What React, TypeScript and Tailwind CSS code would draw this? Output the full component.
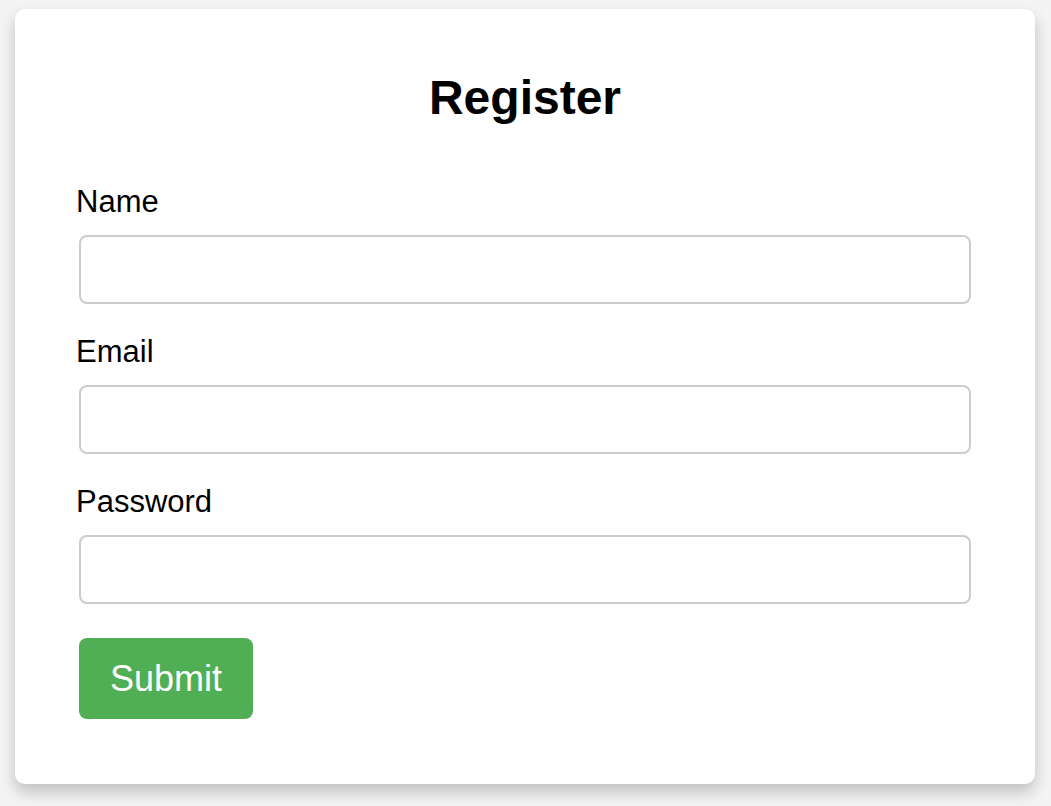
export default function App() {
  const fields = ['Name', 'Email', 'Password'];
  return (
    <div className="min-h-screen bg-[#f4f4f4] pt-[9px] pl-[15px] font-['Liberation_Sans',Arial,sans-serif] text-black">
      <div className="w-[1020px] h-[775px] bg-white rounded-[10px] shadow-[0_8px_16px_rgba(0,0,0,0.22)] px-[61px] pt-[62px]">
        <h2 className="text-center text-[48px] font-bold leading-[53px]">Register</h2>
        <form className="mt-[61px]" onSubmit={(e) => e.preventDefault()}>
          {fields.map((f) => (
            <div key={f} className="mb-[31px]">
              <label className="block text-[31px] leading-[33px]">{f}</label>
              <input
                type={f === 'Password' ? 'password' : f === 'Email' ? 'email' : 'text'}
                className="block mt-[17px] mx-[3px] w-[892px] h-[69px] border-2 border-[#cccccc] rounded-[8px] outline-none px-3 text-[29px]"
              />
            </div>
          ))}
          <button
            type="submit"
            className="mt-[3px] ml-[3px] h-[81px] px-[31px] bg-[#50af55] text-white text-[36px] rounded-[8px]"
          >
            Submit
          </button>
        </form>
      </div>
    </div>
  );
}
